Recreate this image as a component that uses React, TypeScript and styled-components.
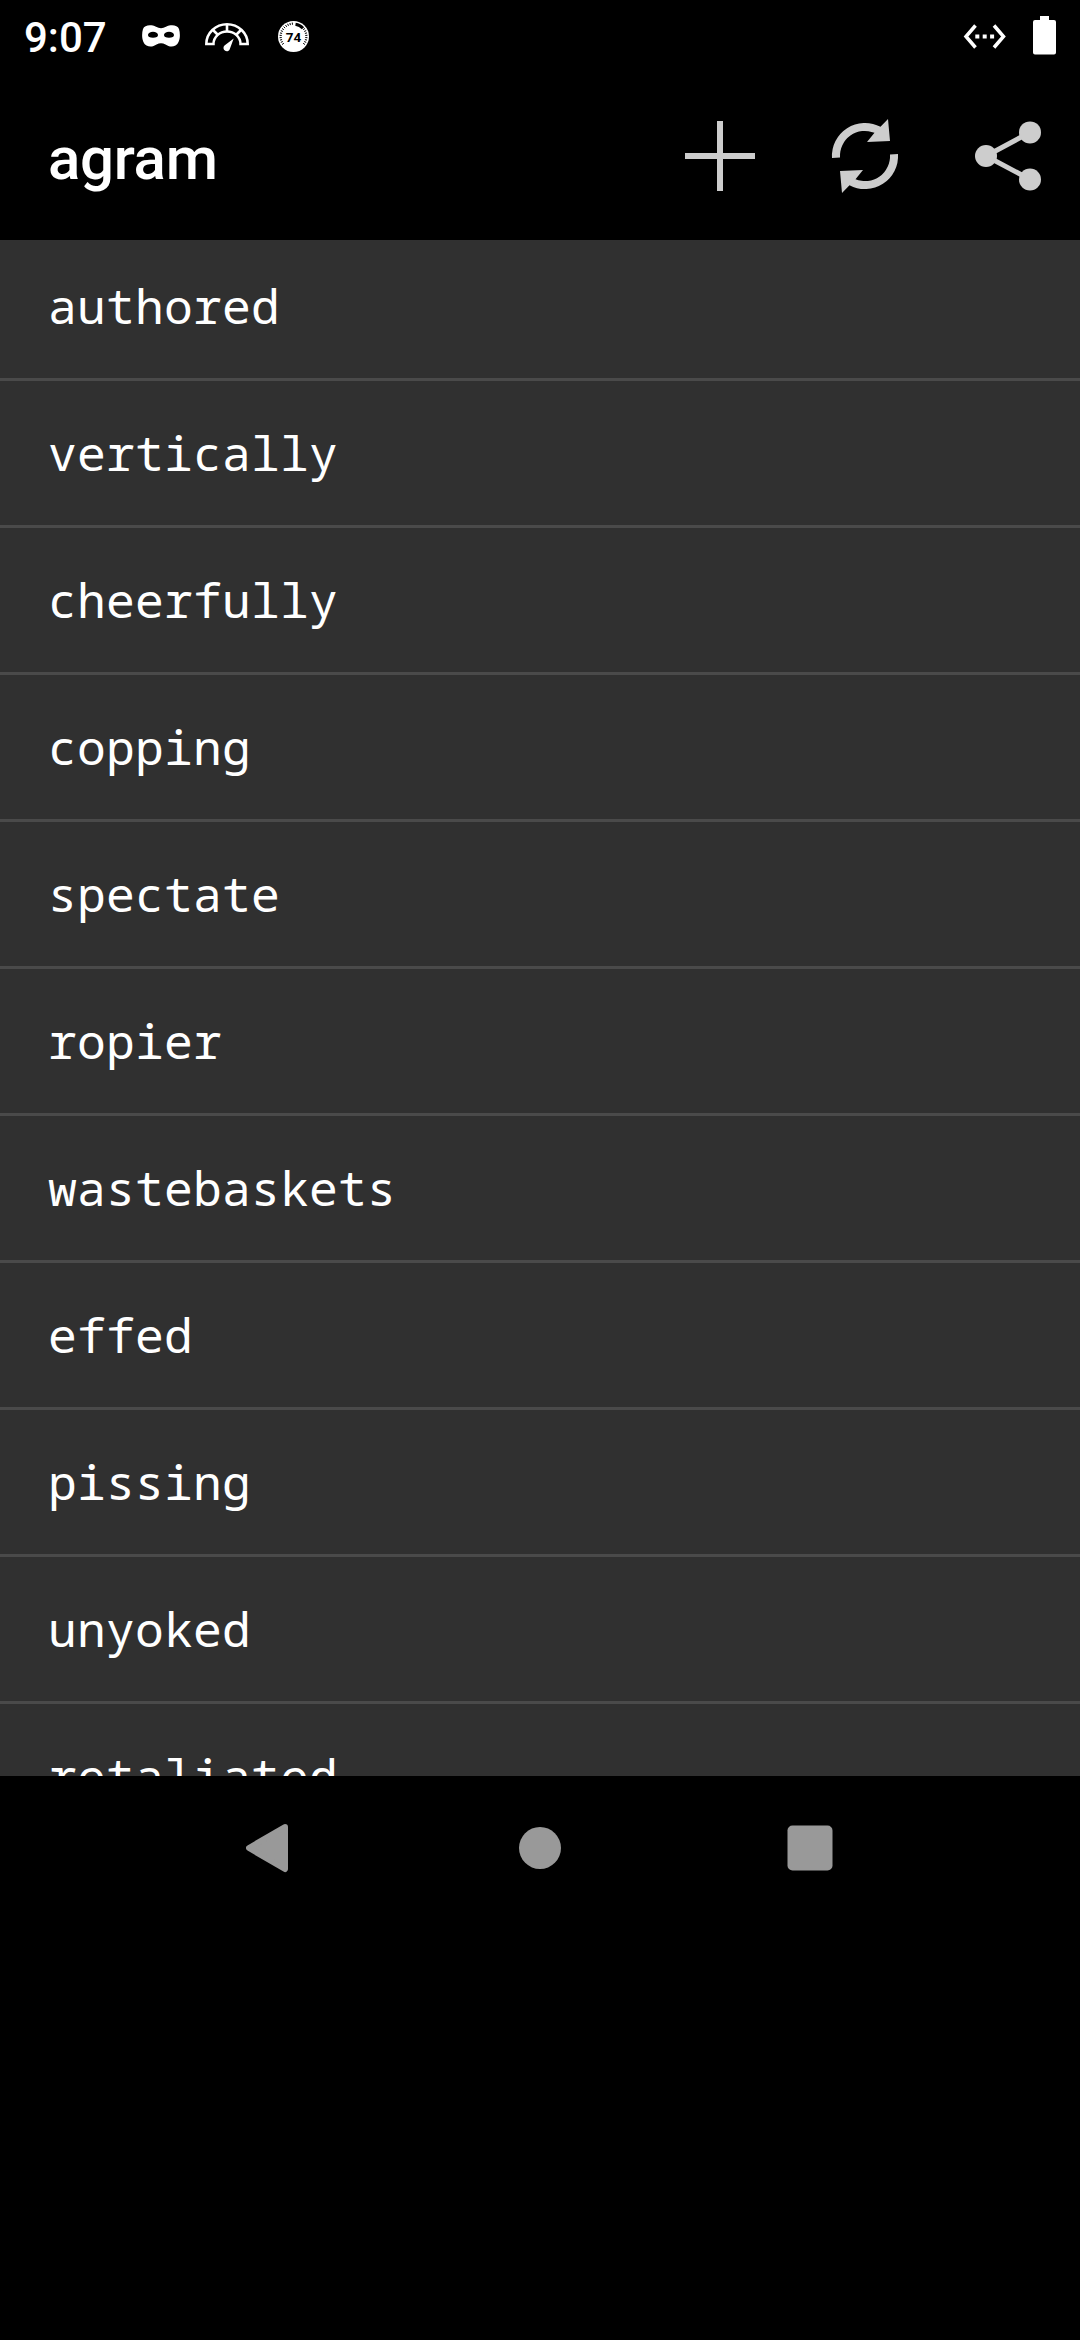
import React from "react";
import styled, { createGlobalStyle } from "styled-components";

const GlobalStyle = createGlobalStyle`
  html, body { margin: 0; background: #000; }
  * { box-sizing: border-box; }
`;

const Screen = styled.div`
  display: flex;
  flex-direction: column;
  width: 1080px;
  height: 2340px;
  background: #000;
  overflow: hidden;
  font-family: Roboto, sans-serif;
`;

const StatusBar = styled.header`
  flex: none;
  display: flex;
  align-items: center;
  height: 72px;
  padding: 0 24px;
  color: #fff;
`;

const Clock = styled.span`
  width: 118px;
  font-size: 42px;
  font-weight: 500;
  line-height: 48px;
  padding-top: 3px;
`;

const StatusIcons = styled.div<{ $gap: number; $end?: boolean }>`
  display: flex;
  align-items: center;
  gap: ${(p) => p.$gap}px;
  margin-left: ${(p) => (p.$end ? "auto" : "0")};
`;

const Glyph = styled.svg`
  display: block;
  flex: none;
`;

const AppBar = styled.div`
  flex: none;
  display: flex;
  align-items: center;
  justify-content: space-between;
  height: 168px;
  padding-left: 48px;
`;

const Title = styled.h1`
  margin: 0;
  color: #fff;
  font-size: 60px;
  font-weight: 500;
  letter-spacing: -0.3px;
  line-height: 70px;
  padding-top: 5px;
`;

const Actions = styled.div`
  display: flex;
`;

const ActionButton = styled.button`
  display: flex;
  align-items: center;
  justify-content: center;
  width: 144px;
  height: 144px;
  padding: 0;
  border: 0;
  background: none;
  color: #cdcdcd;
`;

const ListViewport = styled.main`
  flex: none;
  height: 1536px;
  overflow: hidden;
  background: #303030;
`;

const WordList = styled.ul`
  margin: -6px 0 0;
  padding: 0;
  list-style: none;
`;

const WordRow = styled.li`
  display: flex;
  align-items: center;
  height: 147px;
  padding-left: 48px;
  border-bottom: 3px solid #4a4a4a;
  color: #fff;
  font-family: "Droid Sans Mono", "Noto Sans Mono", "Noto Mono", "DejaVu Sans Mono", monospace;
  font-size: 48px;
  letter-spacing: 0.2px;
  line-height: 56px;
`;

const NavBar = styled.nav`
  flex: none;
  display: flex;
  justify-content: center;
  align-items: center;
  height: 144px;
  color: #999;
`;

const NavButton = styled.button`
  display: flex;
  align-items: center;
  justify-content: center;
  width: 270px;
  height: 144px;
  padding: 0;
  border: 0;
  background: none;
  color: inherit;
`;

const words = [
  "authored",
  "vertically",
  "cheerfully",
  "copping",
  "spectate",
  "ropier",
  "wastebaskets",
  "effed",
  "pissing",
  "unyoked",
  "retaliated",
];

const polar = (cx: number, cy: number, r: number, deg: number) => {
  const a = (deg * Math.PI) / 180;
  return [cx + r * Math.cos(a), cy + r * Math.sin(a)];
};

const MaskIcon = () => (
  <Glyph width="38" height="72" viewBox="142 0 38 72">
    <path
      fill="#fff"
      fillRule="evenodd"
      d="M143 29C144.500 25 151 24.300 156 26.800Q161 29.500 166 26.800C171 24.300 177.500 25 179 29C181 36 179.500 43 175.500 45.500C172 47.500 168.500 46.500 165.500 44.500Q161 42 156.500 44.500C153.500 46.500 150 47.500 146.500 45.500C142.500 43 141 36 143 29ZM148 35A5 2.800 0 0 0 158 35A5 3.200 0 0 0 148 35ZM164 35A5 2.800 0 0 0 174 35A5 3.200 0 0 0 164 35Z"
    />
  </Glyph>
);

const GaugeIcon = () => (
  <Glyph width="46" height="72" viewBox="204 0 46 72" fill="none" stroke="#fff">
    <path
      strokeWidth="2.500"
      d="M206.300 44A20.700 19.800 0 0 1 247.700 44H240.500A13.500 12.500 0 0 0 213.500 44Z"
    />
    <path strokeWidth="2.600" d="M227 24V31M213 30L218 35M241 30L236 35" />
    <path fill="#fff" stroke="none" d="M233.700 38.500L230 48.500A3.300 3.300 0 1 1 224.500 45.500Z" />
  </Glyph>
);

const DialIcon = () => (
  <Glyph width="36" height="72" viewBox="274 0 36 72">
    <circle cx="293.500" cy="36.500" r="15.500" fill="#fff" />
    {Array.from({ length: 26 }, (_, i) => 145 + i * 10)
      .filter((a) => a < 272 || a > 315)
      .map((a) => {
        const [x1, y1] = polar(293.5, 36.5, 11.8, a);
        const [x2, y2] = polar(293.5, 36.5, 14, a);
        return <line key={a} x1={x1} y1={y1} x2={x2} y2={y2} stroke="#000" strokeWidth="1" />;
      })}
    <path d="M295.500 24.200A12.500 12.500 0 0 1 303 28.300" stroke="#000" strokeWidth="3" fill="none" />
    <text
      x="293.500"
      y="41.500"
      textAnchor="middle"
      fontFamily="Roboto, sans-serif"
      fontWeight="700"
      fontSize="13.500"
      fill="#000"
    >
      74
    </text>
  </Glyph>
);

const EthernetIcon = () => (
  <Glyph width="44" height="72" viewBox="963 0 44 72">
    <path
      d="M975.500 25.500L966 36.500L975.500 47.500M994 25.500L1003.500 36.500L994 47.500"
      fill="none"
      stroke="#fff"
      strokeWidth="3.500"
    />
    <path fill="#fff" d="M975.300 34.500h4v4h-4zM982.700 34.500h4v4h-4zM990.100 34.500h4v4h-4z" />
  </Glyph>
);

const BatteryIcon = () => (
  <Glyph width="23" height="72" viewBox="1033 0 23 72">
    <path
      fill="#fff"
      d="M1040 16H1049V20H1054Q1056 20 1056 22V52.500Q1056 54.500 1054 54.500H1035Q1033 54.500 1033 52.500V22Q1033 20 1035 20H1040Z"
    />
  </Glyph>
);

const AddIcon = () => (
  <Glyph width="96" height="96" viewBox="672 108 96 96">
    <path fill="currentColor" d="M717 121h6v32h32v6h-32v32h-6v-32h-32v-6h32z" />
  </Glyph>
);

const arrow =
  "M832 158A33 33 0 0 1 880.500 126.800L888 119L890 141L867 142L874.500 132.800A25 25 0 0 0 840 157.500Z";

const RefreshIcon = () => (
  <Glyph width="96" height="96" viewBox="816 108 96 96" fill="currentColor">
    <path d={arrow} />
    <path d={arrow} transform="rotate(180 865 156)" />
  </Glyph>
);

const ShareIcon = () => (
  <Glyph width="96" height="96" viewBox="960 108 96 96" fill="currentColor">
    <path d="M1030 132.400L986 156L1030 179.400" fill="none" stroke="currentColor" strokeWidth="5" />
    <circle cx="986" cy="156" r="11" />
    <circle cx="1030" cy="132.400" r="11" />
    <circle cx="1030" cy="179.500" r="11" />
  </Glyph>
);

export default function App() {
  return (
    <>
      <GlobalStyle />
      <Screen>
        <StatusBar>
          <Clock>9:07</Clock>
          <StatusIcons $gap={24}>
            <MaskIcon />
            <GaugeIcon />
            <DialIcon />
          </StatusIcons>
          <StatusIcons $end $gap={26}>
            <EthernetIcon />
            <BatteryIcon />
          </StatusIcons>
        </StatusBar>
        <AppBar>
          <Title>agram</Title>
          <Actions>
            <ActionButton aria-label="Add">
              <AddIcon />
            </ActionButton>
            <ActionButton aria-label="Refresh">
              <RefreshIcon />
            </ActionButton>
            <ActionButton aria-label="Share">
              <ShareIcon />
            </ActionButton>
          </Actions>
        </AppBar>
        <ListViewport>
          <WordList>
            {words.map((word) => (
              <WordRow key={word}>{word}</WordRow>
            ))}
          </WordList>
        </ListViewport>
        <NavBar>
          <NavButton aria-label="Back">
            <Glyph width="48" height="60" viewBox="246 1818 48 60">
              <path
                d="M285 1827L249 1848L285 1869Z"
                fill="currentColor"
                stroke="currentColor"
                strokeWidth="6"
                strokeLinejoin="round"
              />
            </Glyph>
          </NavButton>
          <NavButton aria-label="Home">
            <Glyph width="42" height="42" viewBox="0 0 42 42">
              <circle cx="21" cy="21" r="21" fill="currentColor" />
            </Glyph>
          </NavButton>
          <NavButton aria-label="Recent apps">
            <Glyph width="46" height="46" viewBox="0 0 46 46">
              <rect x="0.500" y="0.500" width="45" height="45" rx="5" fill="currentColor" />
            </Glyph>
          </NavButton>
        </NavBar>
      </Screen>
    </>
  );
}
